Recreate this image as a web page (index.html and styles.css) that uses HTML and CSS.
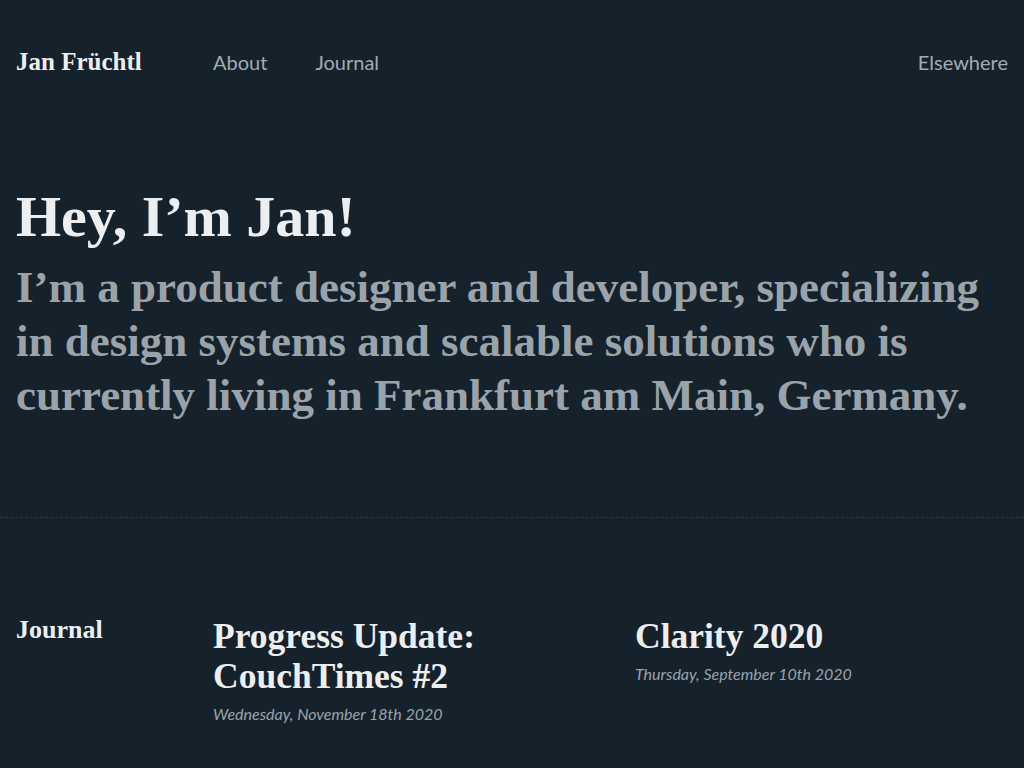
FILE: index.html
```html
<!DOCTYPE html>
<html lang="en">
<head>
<meta charset="utf-8">
<title>Jan Früchtl</title>
<link rel="stylesheet" href="styles.css">
</head>
<body>
<header class="site-header">
  <a class="logo" href="#">Jan Früchtl</a>
  <nav class="main-nav">
    <a href="#">About</a>
    <a href="#">Journal</a>
  </nav>
  <a class="elsewhere" href="#">Elsewhere</a>
</header>
<section class="hero">
  <h1>Hey, I’m Jan!</h1>
  <p>I’m a product designer and developer, specializing in design systems and scalable solutions who is currently living in Frankfurt am Main, Germany.</p>
</section>
<hr class="divider">
<section class="journal">
  <h2 class="section-label">Journal</h2>
  <article class="post">
    <h3>Progress Update: CouchTimes #2</h3>
    <time>Wednesday, November 18th 2020</time>
  </article>
  <article class="post">
    <h3>Clarity 2020</h3>
    <time>Thursday, September 10th 2020</time>
  </article>
</section>
</body>
</html>
```
FILE: styles.css
```css
html, body {
  margin: 0;
  padding: 0;
  background: #15222c;
  color: #eceef0;
}
body {
  font-family: "Liberation Serif", serif;
}
a { text-decoration: none; color: inherit; }

.site-header {
  display: grid;
  grid-template-columns: 197px 1fr auto;
  align-items: baseline;
  padding: 48px 16px 0;
  height: 28px;
}
.logo {
  font-family: "Liberation Serif", serif;
  font-weight: 700;
  font-size: 25px;
  line-height: 28px;
  color: #eceef0;
}
.main-nav {
  display: flex;
  gap: 48px;
}
.main-nav a, .elsewhere {
  font-family: "Lato", sans-serif;
  font-size: 20px;
  line-height: 28px;
  color: #a3abb2;
}

.hero {
  padding: 109px 16px 0;
}
.hero h1 {
  margin: 0;
  font-size: 58px;
  line-height: 64px;
  font-weight: 700;
  color: #eceef0;
}
.hero p {
  margin: 11px 0 0;
  font-size: 45px;
  line-height: 54px;
  font-weight: 700;
  color: #9ba3aa;
}

.divider {
  margin: 95px 0 0;
  border: 0;
  border-top: 1px dashed #2a3a45;
  height: 0;
}

.journal {
  display: grid;
  grid-template-columns: 197px 422px 1fr;
  padding: 98px 16px 0;
  align-items: start;
}
.section-label {
  margin: 0;
  font-size: 26px;
  line-height: 28px;
  font-weight: 700;
  color: #eceef0;
}
.post h3 {
  margin: 0;
  font-size: 35.5px;
  line-height: 40px;
  font-weight: 700;
  color: #eceef0;
  max-width: 400px;
}
.post time {
  display: block;
  margin-top: 8px;
  font-family: "Lato", sans-serif;
  font-style: italic;
  font-size: 16px;
  line-height: 19px;
  color: #9ba3aa;
}
```
